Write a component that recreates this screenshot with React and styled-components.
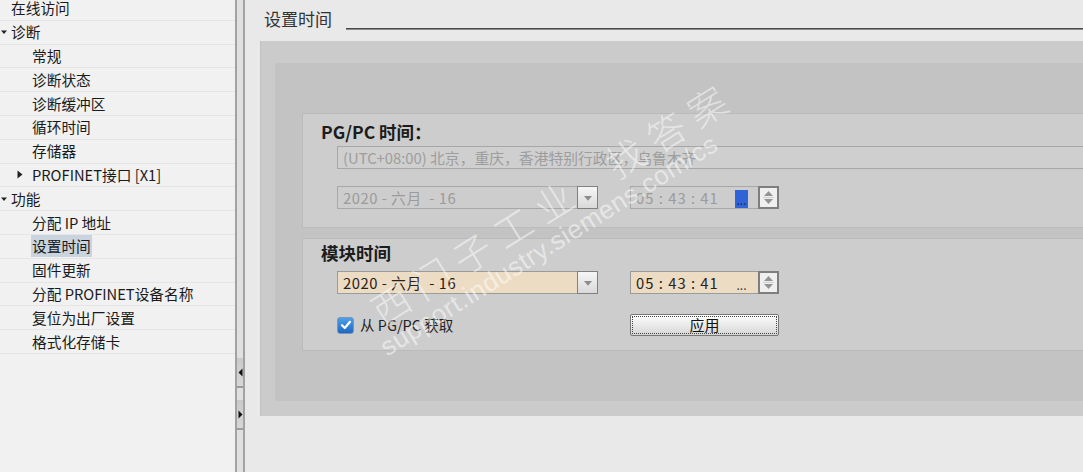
import React from 'react';
import styled, { createGlobalStyle } from 'styled-components';

const GlobalStyle = createGlobalStyle`
  html, body {
    margin: 0;
    padding: 0;
    background: #e9e9e9;
  }
  * {
    box-sizing: border-box;
  }
`;

const FONT = `"Noto Sans CJK SC", "Noto Sans", sans-serif`;

const treeItems = [
  { text: '在线访问', level: 0 },
  { text: '诊断', level: 0, arrow: 'down' },
  { text: '常规', level: 1 },
  { text: '诊断状态', level: 1 },
  { text: '诊断缓冲区', level: 1 },
  { text: '循环时间', level: 1 },
  { text: '存储器', level: 1 },
  { text: 'PROFINET接口 [X1]', level: 1, arrow: 'right' },
  { text: '功能', level: 0, arrow: 'down' },
  { text: '分配 IP 地址', level: 1 },
  { text: '设置时间', level: 1, selected: true },
  { text: '固件更新', level: 1 },
  { text: '分配 PROFINET设备名称', level: 1 },
  { text: '复位为出厂设置', level: 1 },
  { text: '格式化存储卡', level: 1 },
];

const TriDown = ({ color = '#222', size = 6 }) => (
  <svg width={size} height={size} viewBox="0 0 6 6">
    <path d="M0 1.5 L6 1.5 L3 5 Z" fill={color} />
  </svg>
);

const TriRight = () => (
  <svg width="6" height="9" viewBox="0 0 6 9">
    <path d="M0.5 0.5 L5.5 4.5 L0.5 8.5 Z" fill="#222" />
  </svg>
);

const SpinIcons = () => (
  <svg width="13" height="17" viewBox="0 0 13 17">
    <path d="M2 7 L6.5 2 L11 7 Z" fill="#939393" />
    <line x1="1" y1="8.5" x2="12" y2="8.5" stroke="#d0d0d0" strokeWidth="1" />
    <path d="M2 10 L11 10 L6.5 15 Z" fill="#939393" />
  </svg>
);

const CheckMark = () => (
  <svg width="12" height="12" viewBox="0 0 12 12">
    <path d="M2 6.2 L4.8 9 L10 2.8" stroke="#fff" strokeWidth="2.2" fill="none" strokeLinecap="round" strokeLinejoin="round" />
  </svg>
);

const DateInput = ({ disabled }) => (
  <DateField $disabled={disabled}>
    <FieldText $disabled={disabled}>2020 - 六月&nbsp;&nbsp;- 16</FieldText>
    <DropButton>
      <TriDown color="#8c8c8c" size={8} />
    </DropButton>
  </DateField>
);

const TimeInput = ({ disabled }) => (
  <TimeField>
    <TimeBox $disabled={disabled}>
      <FieldText $disabled={disabled} $wide>05 : 43 : 41</FieldText>
      <Dots $active={disabled}>...</Dots>
    </TimeBox>
    <Spinner>
      <SpinIcons />
    </Spinner>
  </TimeField>
);

const App = () => {
  return (
    <>
      <GlobalStyle />
      <Page>
        <LeftPanel>
          <TreeList>
            {treeItems.map((item) => (
              <TreeRow key={item.text} $level={item.level}>
                <ArrowSlot $level={item.level}>
                  {item.arrow === 'down' && <TriDown />}
                  {item.arrow === 'right' && <TriRight />}
                </ArrowSlot>
                <TreeText $selected={item.selected}>{item.text}</TreeText>
              </TreeRow>
            ))}
          </TreeList>
        </LeftPanel>

        <Splitter>
          <SplitButton $first>
            <svg width="5" height="9" viewBox="0 0 5 9">
              <path d="M4.5 0.5 L0.5 4.5 L4.5 8.5 Z" fill="#111" />
            </svg>
          </SplitButton>
          <SplitButton>
            <svg width="5" height="9" viewBox="0 0 5 9">
              <path d="M0.5 0.5 L4.5 4.5 L0.5 8.5 Z" fill="#111" />
            </svg>
          </SplitButton>
        </Splitter>

        <RightPanel>
          <TitleRow>
            <Title>设置时间</Title>
            <TitleLine />
          </TitleRow>

          <OuterBox>
            <InnerBox>
              <Group $pt={8} $pb={18}>
                <GroupTitle>PG/PC 时间：</GroupTitle>
                <GroupBody>
                  <ZoneField>(UTC+08:00) 北京，重庆，香港特别行政区，乌鲁木齐</ZoneField>
                  <FieldGrid $mt={17}>
                    <DateInput disabled />
                    <TimeInput disabled />
                  </FieldGrid>
                </GroupBody>
              </Group>

              <Group $pt={4} $pb={14} $mt={10}>
                <GroupTitle>模块时间</GroupTitle>
                <GroupBody>
                  <FieldGrid $mt={8}>
                    <DateInput />
                    <TimeInput />
                  </FieldGrid>
                  <FieldGrid $mt={20}>
                    <CheckLabel>
                      <CheckBox>
                        <CheckMark />
                      </CheckBox>
                      从 PG/PC 获取
                    </CheckLabel>
                    <ApplyButton>应用</ApplyButton>
                  </FieldGrid>
                </GroupBody>
              </Group>
            </InnerBox>
          </OuterBox>
        </RightPanel>

        <Watermark>
          <WatermarkBig>西门子工业&nbsp;&nbsp;找答案</WatermarkBig>
          <WatermarkSmall>support.industry.siemens.com/cs</WatermarkSmall>
        </Watermark>
      </Page>
    </>
  );
};

export default App;

// styled-components
const Page = styled.div`
  position: relative;
  display: flex;
  width: 1083px;
  height: 472px;
  overflow: hidden;
  font-family: ${FONT};
  color: #1a1a1a;
`;

const LeftPanel = styled.div`
  width: 235px;
  flex-shrink: 0;
  background: #f1f1f1;
  overflow: hidden;
`;

const TreeList = styled.div`
  margin-top: -3px;
`;

const TreeRow = styled.div`
  display: flex;
  align-items: center;
  height: 23.8px;
  border-bottom: 1px solid #e5e5e5;
  padding-left: ${(p) => (p.$level === 0 ? 1 : 17)}px;
`;

const ArrowSlot = styled.span`
  display: flex;
  align-items: center;
  width: ${(p) => (p.$level === 0 ? 10 : 15)}px;
  flex-shrink: 0;
`;

const TreeText = styled.span`
  font-size: 14.7px;
  line-height: 22px;
  padding: 0 1px;
  margin-left: -1px;
  white-space: nowrap;
  background: ${(p) => (p.$selected ? '#cad4de' : 'transparent')};
`;

const Splitter = styled.div`
  width: 10px;
  flex-shrink: 0;
  display: flex;
  flex-direction: column;
  background: #e0e0e0;
  border-left: 2px solid #a2a2a2;
  border-right: 2px solid #a2a2a2;
`;

const SplitButton = styled.div`
  height: 30px;
  margin-top: ${(p) => (p.$first ? 358 : 12)}px;
  display: flex;
  align-items: center;
  justify-content: center;
  background: linear-gradient(#c9c9c9, #d6d6d6);
  border-bottom: 2px solid #9c9c9c;
`;

const RightPanel = styled.div`
  flex: 1;
  min-width: 0;
  background: #e9e9e9;
  overflow: hidden;
`;

const TitleRow = styled.div`
  display: flex;
  align-items: flex-end;
  height: 30px;
  padding-left: 19px;
`;

const Title = styled.div`
  font-size: 17px;
  line-height: 22px;
  color: #333;
`;

const TitleLine = styled.div`
  flex: 1;
  height: 2px;
  margin-left: 14px;
  border-top: 1px solid #4a4a4a;
  border-bottom: 1px solid #8a8a8a;
`;

const OuterBox = styled.div`
  display: flex;
  height: 375px;
  margin: 11px -60px 0 15px;
  padding: 22px 0 15px 14px;
  background: #cbcbcb;
  border-left: 1px solid #c2c2c2;
`;

const InnerBox = styled.div`
  flex: 1;
  padding: 50px 0 0 27px;
  background: #c3c3c3;
`;

const Group = styled.div`
  margin-top: ${(p) => p.$mt || 0}px;
  padding: ${(p) => p.$pt}px 0 ${(p) => p.$pb}px 18px;
  background: #cdcdcd;
  border: 1px solid #bbbbbb;
  border-right: none;
`;

const GroupTitle = styled.div`
  font-size: 17.5px;
  font-weight: 700;
  line-height: 20px;
  color: #1c1c1c;
`;

const GroupBody = styled.div`
  padding-left: 16px;
`;

const ZoneField = styled.div`
  margin-top: 4px;
  height: 23px;
  padding-left: 5px;
  border: 1px solid #a7a7a7;
  border-right: none;
  background: #cfcfcf;
  color: #9d9d9d;
  font-size: 14.8px;
  line-height: 21px;
  white-space: nowrap;
`;

const FieldGrid = styled.div`
  display: grid;
  grid-template-columns: 261px 149px;
  column-gap: 32px;
  align-items: center;
  margin-top: ${(p) => p.$mt}px;
`;

const DateField = styled.div`
  display: flex;
  height: 23px;
  border: 1px solid ${(p) => (p.$disabled ? '#a8a8a8' : '#9b9b9b')};
  background: ${(p) => (p.$disabled ? '#cdcdcd' : '#eddcc4')};
`;

const FieldText = styled.span`
  flex: 1;
  padding-left: 5px;
  font-size: 14.8px;
  line-height: 21px;
  letter-spacing: ${(p) => (p.$wide ? 1 : 0.5)}px;
  white-space: nowrap;
  color: ${(p) => (p.$disabled ? '#9b9b9b' : '#2a2218')};
`;

const DropButton = styled.div`
  width: 21px;
  margin: -1px -1px -1px 0;
  display: flex;
  align-items: center;
  justify-content: center;
  border: 1px solid #808080;
  background: linear-gradient(#f6f6f6, #d9d9d9);
`;

const TimeField = styled.div`
  display: flex;
  height: 23px;
`;

const TimeBox = styled.div`
  flex: 1;
  display: flex;
  border: 1px solid ${(p) => (p.$disabled ? '#a8a8a8' : '#9b9b9b')};
  border-right: none;
  background: ${(p) => (p.$disabled ? '#cdcdcd' : '#eddcc4')};
`;

const Dots = styled.span`
  align-self: flex-end;
  width: 13px;
  height: 18px;
  margin-right: 10px;
  text-align: center;
  font-size: 12px;
  line-height: 20px;
  color: ${(p) => (p.$active ? '#1a2a55' : '#3a3a3a')};
  background: ${(p) => (p.$active ? '#2f63d8' : 'transparent')};
`;

const Spinner = styled.div`
  width: 21px;
  display: flex;
  align-items: center;
  justify-content: center;
  border: 2px solid #7e7e7e;
  background: #efefef;
`;

const CheckLabel = styled.label`
  display: flex;
  align-items: center;
  gap: 6px;
  font-size: 14.5px;
  line-height: 20px;
  color: #222;
  white-space: nowrap;
`;

const CheckBox = styled.span`
  width: 17px;
  height: 17px;
  display: flex;
  align-items: center;
  justify-content: center;
  border: 1px solid #7a96b8;
  border-radius: 3px;
  background: linear-gradient(#4e9fe8, #1f67c0);
`;

const ApplyButton = styled.button`
  height: 22px;
  padding: 0;
  font-family: ${FONT};
  font-size: 15px;
  line-height: 18px;
  color: #111;
  border: 1px solid #777;
  outline: 1px dotted #444;
  outline-offset: -3px;
  border-radius: 2px;
  background: linear-gradient(#ffffff, #ececec 45%, #d6d6d6);
`;

const Watermark = styled.div`
  position: absolute;
  left: 390px;
  top: 291px;
  transform: rotate(-32deg);
  transform-origin: 0 100%;
  pointer-events: none;
  color: rgba(255, 255, 255, 0.5);
  white-space: nowrap;
`;

const WatermarkBig = styled.div`
  font-size: 38px;
  line-height: 42px;
  letter-spacing: 10px;
  font-weight: 300;
  padding-left: 12px;
`;

const WatermarkSmall = styled.div`
  font-family: "Liberation Sans", sans-serif;
  font-size: 26px;
  line-height: 28px;
  letter-spacing: 0.5px;
`;
